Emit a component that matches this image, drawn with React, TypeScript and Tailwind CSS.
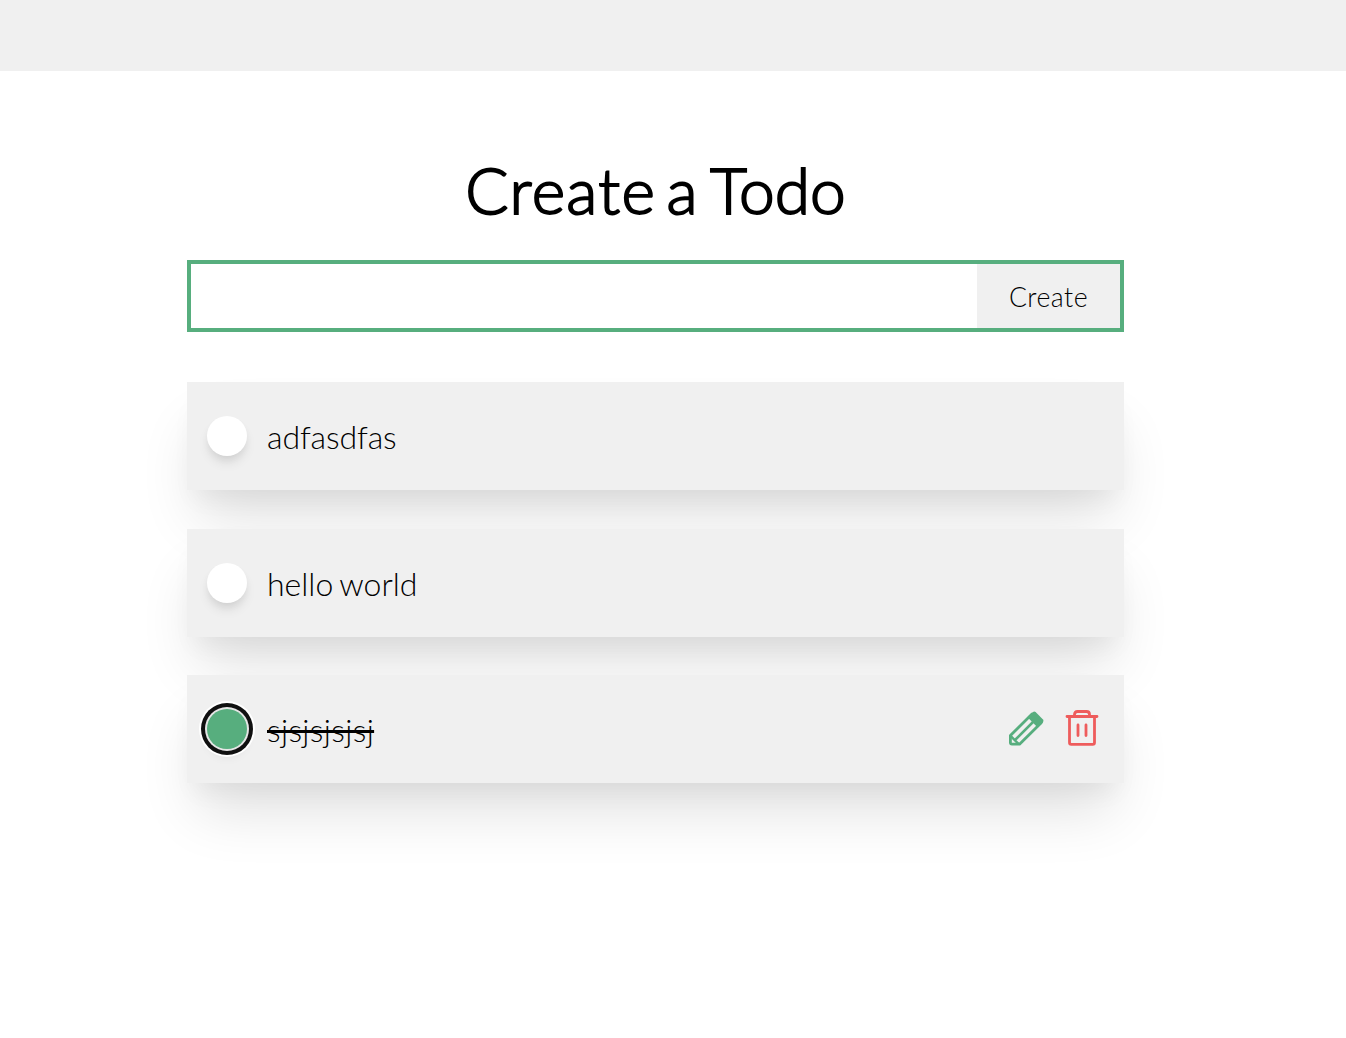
import React from "react";

const todos = [
  { text: "adfasdfas", done: false, style: "mb-[39px]", tracking: "tracking-[-0.1px]" },
  { text: "hello world", done: false, style: "mb-[38px]", tracking: "[word-spacing:-2px]" },
  { text: "sjsjsjsjsj", done: true, style: "", tracking: "tracking-[0.35px] line-through decoration-[3px]" },
];

function Pencil() {
  return (
    <svg className="h-9 w-9 overflow-visible" viewBox="0 0 36 36" fill="none" stroke="#57ae7e" strokeWidth="2.8" strokeLinejoin="round">
      <path d="M2.4 24.5 24 3 33 12 11.5 33.2H4q-1.6 0-1.6-1.6z" />
      <path d="M19.5 6.3 25 1q1.3-1 2.6 0L35 8.6q1 1.3 0 2.6L29.7 16.5z" fill="#57ae7e" stroke="none" />
      <path d="M2.8 25.2l8 8M7.5 28.5 25 11" strokeWidth="2.5" />
    </svg>
  );
}

function Trash() {
  return (
    <svg className="h-9 w-9 overflow-visible" viewBox="0 0 36 36" fill="none" stroke="#ee5c5c" strokeWidth="2.8" strokeLinecap="round" strokeLinejoin="round">
      <path d="M3 5.5h30M10.5 5V3.5q0-3 3-3h9q3 0 3 3V5M5.5 6v25.5q0 1.8 1.8 1.8h21.4q1.8 0 1.8-1.8V6M14 14v10.500M22 14v10.500" />
    </svg>
  );
}

export default function App() {
  return (
    <div className="h-[1038px] overflow-hidden bg-white font-['Lato',sans-serif] text-black">
      <header className="h-[71px] bg-[#f0f0f0]" />
      <main className="ml-[187px] w-[937px]">
        <h1 className="pt-[75px] text-center text-[64px] leading-[88px] font-light [-webkit-text-stroke:1.9px_black] [word-spacing:-7px]">
          <span className="tracking-[1.3px]">Create</span> <span className="tracking-[4px]">a</span> Todo
        </h1>
        <form className="mt-[26px] mb-[50px] flex h-[72px] border-4 border-[#57ae7e]">
          <input aria-label="Todo" className="min-w-0 flex-1 outline-none" />
          <button type="button" className="w-[143px] bg-[#f0f0f0] pt-px text-[26.67px] font-light tracking-[0.5px]">Create</button>
        </form>
        <ul>
          {todos.map((todo) => (
            <li
              key={todo.text}
              className={`flex h-[108px] items-center bg-[#f0f0f0] pl-5 pr-6 shadow-[0_38px_58px_-10px_rgba(0,0,0,0.12),0_16px_24px_-8px_rgba(0,0,0,0.05)] ${todo.style}`}
            >
              <button
                aria-label="Toggle"
                className={`size-10 rounded-full ${
                  todo.done
                    ? "bg-[#57ae7e] shadow-[0_0_0_2px_#e6e6e6,0_0_0_6px_#101010,0_0_0_8px_#fff,0_8px_12px_-2px_rgba(0,0,0,0.1)]"
                    : "bg-white shadow-[0_8px_12px_-2px_rgba(0,0,0,0.1),0_4px_8px_-2px_rgba(0,0,0,0.06)]"
                }`}
              />
              <span className={`ml-5 flex-1 pt-0.5 text-[32px] leading-[48px] font-light ${todo.tracking}`}>{todo.text}</span>
              {todo.done && (
                <div className="flex gap-5">
                  <Pencil />
                  <Trash />
                </div>
              )}
            </li>
          ))}
        </ul>
      </main>
    </div>
  );
}
